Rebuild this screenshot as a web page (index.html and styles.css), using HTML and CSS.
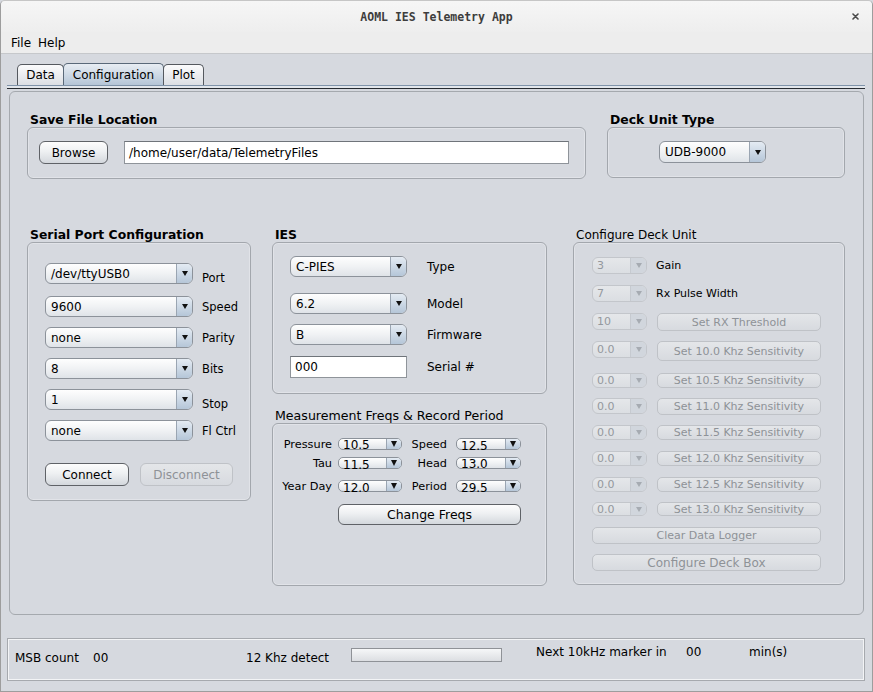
FILE: index.html
```html
<!DOCTYPE html>
<html>
<head>
<meta charset="utf-8">
<title>AOML IES Telemetry App</title>
<link rel="stylesheet" href="styles.css">
</head>
<body>
<div class="window">
  <div class="titlebar">
    <span class="title">AOML IES Telemetry App</span>
    <svg class="close" width="7" height="7" viewBox="0 0 7 7"><path d="M1 1 L6 6 M6 1 L1 6" stroke="#4a4a4a" stroke-width="1.6" stroke-linecap="round"/></svg>
  </div>
  <div class="menubar"><span class="menu">File</span><span class="menu">Help</span></div>
  <div class="tabbar">
    <div class="tab t-data">Data</div>
    <div class="tab t-conf">Configuration</div>
    <div class="tab t-plot">Plot</div>
  </div>
  <div class="tabline"></div>

  <div class="panel">
    <div class="row1">
      <section class="sec sec-save">
        <div class="sec-title bold">Save File Location</div>
        <div class="box box-save">
          <div class="btn btn-browse">Browse</div>
          <div class="field field-path">/home/user/data/TelemetryFiles</div>
        </div>
      </section>
      <section class="sec sec-decktype">
        <div class="sec-title bold">Deck Unit Type</div>
        <div class="box box-decktype">
          <div class="combo combo-udb"><span class="val">UDB-9000</span><span class="arrow"></span></div>
        </div>
      </section>
    </div>

    <div class="row2">
      <section class="sec sec-serial">
        <div class="sec-title bold">Serial Port Configuration</div>
        <div class="box box-serial">
          <div class="srow first"><div class="combo combo-s"><span class="val">/dev/ttyUSB0</span><span class="arrow"></span></div><span class="slbl low">Port</span></div>
          <div class="srow"><div class="combo combo-s"><span class="val">9600</span><span class="arrow"></span></div><span class="slbl">Speed</span></div>
          <div class="srow"><div class="combo combo-s"><span class="val">none</span><span class="arrow"></span></div><span class="slbl">Parity</span></div>
          <div class="srow"><div class="combo combo-s"><span class="val">8</span><span class="arrow"></span></div><span class="slbl">Bits</span></div>
          <div class="srow"><div class="combo combo-s"><span class="val">1</span><span class="arrow"></span></div><span class="slbl low">Stop</span></div>
          <div class="srow last"><div class="combo combo-s"><span class="val">none</span><span class="arrow"></span></div><span class="slbl">Fl Ctrl</span></div>
          <div class="btnrow">
            <div class="btn btn-connect">Connect</div>
            <div class="btn dis btn-disconnect">Disconnect</div>
          </div>
        </div>
      </section>

      <div class="col-ies">
        <section class="sec">
          <div class="sec-title bold">IES</div>
          <div class="box box-ies">
            <div class="irow gap16"><div class="combo combo-i"><span class="val">C-PIES</span><span class="arrow"></span></div><span class="ilbl">Type</span></div>
            <div class="irow gap10"><div class="combo combo-i"><span class="val">6.2</span><span class="arrow"></span></div><span class="ilbl">Model</span></div>
            <div class="irow gap11"><div class="combo combo-i"><span class="val">B</span><span class="arrow"></span></div><span class="ilbl">Firmware</span></div>
            <div class="irow"><div class="field field-serial">000</div><span class="ilbl">Serial #</span></div>
          </div>
        </section>
        <section class="sec sec-meas">
          <div class="sec-title meas-title">Measurement Freqs &amp; Record Period</div>
          <div class="box box-meas">
            <div class="mrow gap5">
              <span class="mlbl w1">Pressure</span><div class="combo mini c1"><span class="val">10.5</span><span class="arrow"></span></div>
              <span class="mlbl w2">Speed</span><div class="combo mini c2"><span class="val low">12.5</span><span class="arrow"></span></div>
            </div>
            <div class="mrow gap9">
              <span class="mlbl w1">Tau</span><div class="combo mini c1"><span class="val low">11.5</span><span class="arrow"></span></div>
              <span class="mlbl w2">Head</span><div class="combo mini c2"><span class="val">13.0</span><span class="arrow"></span></div>
            </div>
            <div class="mrow">
              <span class="mlbl w1">Year Day</span><div class="combo mini c1"><span class="val low">12.0</span><span class="arrow"></span></div>
              <span class="mlbl w2">Period</span><div class="combo mini c2"><span class="val low">29.5</span><span class="arrow"></span></div>
            </div>
            <div class="btn btn-freqs">Change Freqs</div>
          </div>
        </section>
      </div>

      <section class="sec sec-cdu">
        <div class="sec-title">Configure Deck Unit</div>
        <div class="box box-cdu">
          <div class="drow s28"><div class="combo dis dc h17"><span class="val">3</span><span class="arrow"></span></div><span class="dlbl">Gain</span></div>
          <div class="drow s28"><div class="combo dis dc h17"><span class="val">7</span><span class="arrow"></span></div><span class="dlbl">Rx Pulse Width</span></div>
          <div class="drow s28"><div class="combo dis dc h17"><span class="val">10</span><span class="arrow"></span></div><div class="btn dis db h18">Set RX Threshold</div></div>
          <div class="drow s32"><div class="combo dis dc h17"><span class="val">0.0</span><span class="arrow"></span></div><div class="btn dis db h20">Set 10.0 Khz Sensitivity</div></div>
          <div class="drow s25"><div class="combo dis dc h15"><span class="val">0.0</span><span class="arrow"></span></div><div class="btn dis db h15">Set 10.5 Khz Sensitivity</div></div>
          <div class="drow s27"><div class="combo dis dc h16"><span class="val">0.0</span><span class="arrow"></span></div><div class="btn dis db h17">Set 11.0 Khz Sensitivity</div></div>
          <div class="drow s26"><div class="combo dis dc h15"><span class="val">0.0</span><span class="arrow"></span></div><div class="btn dis db h15">Set 11.5 Khz Sensitivity</div></div>
          <div class="drow s26"><div class="combo dis dc h15"><span class="val">0.0</span><span class="arrow"></span></div><div class="btn dis db h15">Set 12.0 Khz Sensitivity</div></div>
          <div class="drow s25"><div class="combo dis dc h15"><span class="val">0.0</span><span class="arrow"></span></div><div class="btn dis db h15">Set 12.5 Khz Sensitivity</div></div>
          <div class="drow s25"><div class="combo dis dc h14"><span class="val">0.0</span><span class="arrow"></span></div><div class="btn dis db h14">Set 13.0 Khz Sensitivity</div></div>
          <div class="drow s27"><div class="btn dis dwide h17">Clear Data Logger</div></div>
          <div class="drow"><div class="btn dis dwide big h17">Configure Deck Box</div></div>
        </div>
      </section>
    </div>
  </div>

  <div class="status">
    <span class="st st-msb">MSB count</span>
    <span class="st st-msbv">00</span>
    <span class="st st-det">12 Khz detect</span>
    <div class="progress"></div>
    <span class="st up st-next">Next 10kHz marker in</span>
    <span class="st up st-nextv">00</span>
    <span class="st up">min(s)</span>
  </div>
</div>
</body>
</html>
```

FILE: styles.css
```css
* { box-sizing: border-box; margin: 0; padding: 0; }
html, body { width: 873px; height: 692px; overflow: hidden; }
body {
  font-family: "DejaVu Sans", "Noto Sans", sans-serif;
  font-size: 12px;
  color: #000;
  background: #d6d9df;
}

.window {
  width: 873px; height: 692px;
  border: 1px solid #9d9d9d;
  border-top-color: #c6c6c6;
  border-radius: 5px 5px 0 0;
  background: #d6d9df;
  display: flex; flex-direction: column;
  overflow: hidden;
}

/* title bar */
.titlebar {
  height: 31px; flex: none;
  display: grid; grid-template-columns: 1fr auto 1fr; align-items: center;
  background: linear-gradient(#f6f6f6, #eeeeee);
}
.title {
  grid-column: 2;
  font-family: "DejaVu Sans Mono", monospace;
  font-weight: bold; font-size: 11.5px; color: #3d3d3d;
}
.close { grid-column: 3; justify-self: end; margin-right: 13px; }

/* menu bar */
.menubar {
  height: 22px; flex: none;
  display: flex; align-items: center;
  padding-left: 10px;
  background: #ededed;
  border-bottom: 1px solid #c6c8cb;
}
.menu { margin-right: 7px; }

/* tabs */
.tabbar {
  height: 22px; margin-top: 9px; padding-left: 16px; flex: none;
  display: flex; align-items: flex-end;
}
.tab {
  height: 21px;
  border: 1px solid #55595f; border-bottom: none;
  border-radius: 5px 5px 0 0;
  background: linear-gradient(#fbfbfc, #dcdfe4);
  display: flex; align-items: center; justify-content: center;
}
.tab + .tab { margin-left: -1px; }
.t-data { width: 47px; }
.t-conf {
  width: 101px; height: 22px;
  background: linear-gradient(#e8edf3, #b4c5d7);
  border-color: #5a6979;
}
.t-plot { width: 41px; }
.tabline {
  margin-left: 6px; width: 858px; height: 4px; flex: none;
  border-top: 1px solid #7f93a9;
  border-bottom: 1px solid #262b31;
  background: #e2e6eb;
}

/* main panel */
.panel {
  margin: 2px 0 0 8px; width: 855px; height: 524px; flex: none;
  border: 1px solid #a5a9ae; border-radius: 6px;
  padding: 19px 0 0 17px;
}
.row1 { display: flex; gap: 21px; }
.row2 { display: flex; align-items: flex-start; margin-top: 47px; }

.sec { display: flex; flex-direction: column; }
.sec-title {
  height: 16px; line-height: 18px; font-size: 12px;
  padding-left: 3px; white-space: nowrap;
}
.bold { font-weight: bold; font-size: 12.4px; }
.meas-title { font-size: 12.6px; }

.box {
  border: 1px solid #a3a7ad; border-radius: 6px;
  box-shadow: inset 0 0 0 1px rgba(255,255,255,0.28);
}

/* generic controls */
.btn {
  border: 1px solid #5f6267; border-radius: 6px;
  background: linear-gradient(#fdfdfd, #eef0f2 45%, #d4d8dd);
  display: flex; align-items: center; justify-content: center;
  white-space: nowrap; font-size: 12px;
}
.btn.dis {
  border-color: #bfc2c7;
  background: linear-gradient(#e4e6e9, #d7dadf);
  color: #8e9297;
}
.field {
  background: #fff;
  border: 1px solid #8f949a; border-top-color: #6f747a;
  padding-left: 4px;
  display: flex; align-items: center;
  font-size: 12px;
}
.combo {
  display: flex;
  border: 1px solid #8c929a; border-radius: 6px;
  background: linear-gradient(#fefefe, #f0f2f4 50%, #dfe3e8);
  overflow: hidden;
}
.combo .val {
  flex: 1; padding-left: 5px;
  display: flex; align-items: center;
  white-space: nowrap; font-size: 12px;
}
.combo .arrow {
  width: 16px; flex: none;
  border-left: 1px solid #9aa5b2;
  background: linear-gradient(#e4ebf3, #b5c6d8);
  display: flex; align-items: center; justify-content: center;
}
.combo .arrow::after {
  content: "";
  border-left: 3.5px solid transparent;
  border-right: 3.5px solid transparent;
  border-top: 5px solid #111;
}
.combo.dis {
  border-color: #c3c6cb;
  background: linear-gradient(#e5e7ea, #dbdee2);
}
.combo.dis .val { color: #94989d; font-size: 11px; padding-left: 4px; }
.combo.dis .arrow { background: #d1d6dd; border-left-color: #c6cad0; }
.combo.dis .arrow::after { border-top-color: #a6abb2; }

/* save file location */
.sec-save { width: 559px; }
.box-save { height: 52px; display: flex; align-items: flex-start; gap: 16px; padding: 13px 0 0 11px; }
.btn-browse { width: 69px; height: 23px; }
.field-path { width: 445px; height: 23px; }

/* deck unit type */
.sec-decktype { width: 238px; }
.box-decktype { height: 51px; padding: 13px 0 0 51px; }
.combo-udb { width: 107px; height: 22px; }

/* serial port */
.sec-serial { width: 224px; margin-right: 21px; }
.box-serial { height: 259px; padding: 20px 0 0 17px; }
.srow { display: flex; align-items: flex-start; height: 31px; }
.srow.first { height: 33px; }
.srow.last { height: 43px; }
.combo-s { width: 148px; height: 21px; }
.slbl { margin-left: 9px; margin-top: 4px; line-height: 14px; font-size: 11.5px; }
.slbl.low { margin-top: 8px; }
.btnrow { display: flex; gap: 11px; }
.btn-connect { width: 84px; height: 23px; }
.btn-disconnect { width: 93px; height: 23px; }

/* IES */
.col-ies { width: 275px; margin-right: 26px; display: flex; flex-direction: column; }
.box-ies { height: 152px; padding: 13px 0 0 17px; }
.irow { display: flex; align-items: center; }
.irow.gap16 { margin-bottom: 16px; }
.irow.gap10 { margin-bottom: 10px; }
.irow.gap11 { margin-bottom: 11px; }
.combo-i { width: 117px; height: 21px; }
.field-serial { width: 117px; height: 22px; }
.ilbl { margin-left: 20px; font-size: 12px; }

/* measurement */
.sec-meas { margin-top: 13px; }
.box-meas { height: 163px; padding: 13px 0 0 9px; }
.mrow { display: flex; align-items: center; height: 14px; }
.mrow.gap5 { margin-bottom: 5px; }
.mrow.gap9 { margin-bottom: 9px; }
.mlbl { text-align: right; font-size: 11.3px; white-space: nowrap; }
.w1 { width: 50px; }
.w2 { width: 45px; }
.combo.mini { height: 12px; border-radius: 5px; overflow: visible; }
.combo.mini .val { font-size: 12px; line-height: 12px; height: 10px; align-items: flex-start; padding-left: 4px; }
.combo.mini .val.low { padding-top: 1px; }
.combo.mini .arrow { width: 15px; border-radius: 0 4px 4px 0; }
.combo.mini .arrow::after { border-top-width: 6px; }
.c1 { width: 64px; margin-left: 6px; }
.c2 { width: 65px; margin-left: 9px; }
.btn-freqs { width: 183px; height: 21px; margin: 11px 0 0 56px; font-size: 12.5px; }

/* configure deck unit */
.sec-cdu { width: 272px; }
.box-cdu { height: 343px; padding: 14px 0 0 18px; }
.drow { display: flex; align-items: flex-start; }
.s25 { height: 25px; } .s26 { height: 26px; } .s27 { height: 27px; }
.s28 { height: 28px; } .s32 { height: 32px; }
.dc { width: 55px; }
.h14 { height: 14px; } .h15 { height: 15px; } .h16 { height: 16px; }
.h17 { height: 17px; } .h18 { height: 18px; } .h20 { height: 20px; }
.dlbl { margin-left: 9px; font-size: 11px; line-height: 17px; }
.db { width: 164px; margin-left: 10px; font-size: 11px; border-radius: 5px; }
.dwide { width: 229px; font-size: 11px; border-radius: 5px; }
.dwide.big { font-size: 12px; }

/* status bar */
.status {
  margin: 23px 0 0 6px; width: 858px; height: 43px; flex: none;
  border: 1px solid #a6a9ae;
  box-shadow: inset 0 0 0 1px #f3f4f6;
  display: flex; align-items: flex-start;
  padding-left: 7px;
}
.st { margin-top: 12px; line-height: 14px; white-space: nowrap; }
.st.up { margin-top: 6px; }
.st-msb { width: 78px; }
.st-msbv { width: 153px; }
.st-det { width: 105px; }
.progress {
  width: 151px; height: 14px; margin-top: 9px;
  border: 1px solid #8f9297;
  background: linear-gradient(#f6f7f8, #dcdee2);
}
.st-next { margin-left: 34px; width: 150px; }
.st-nextv { width: 63px; }
```
